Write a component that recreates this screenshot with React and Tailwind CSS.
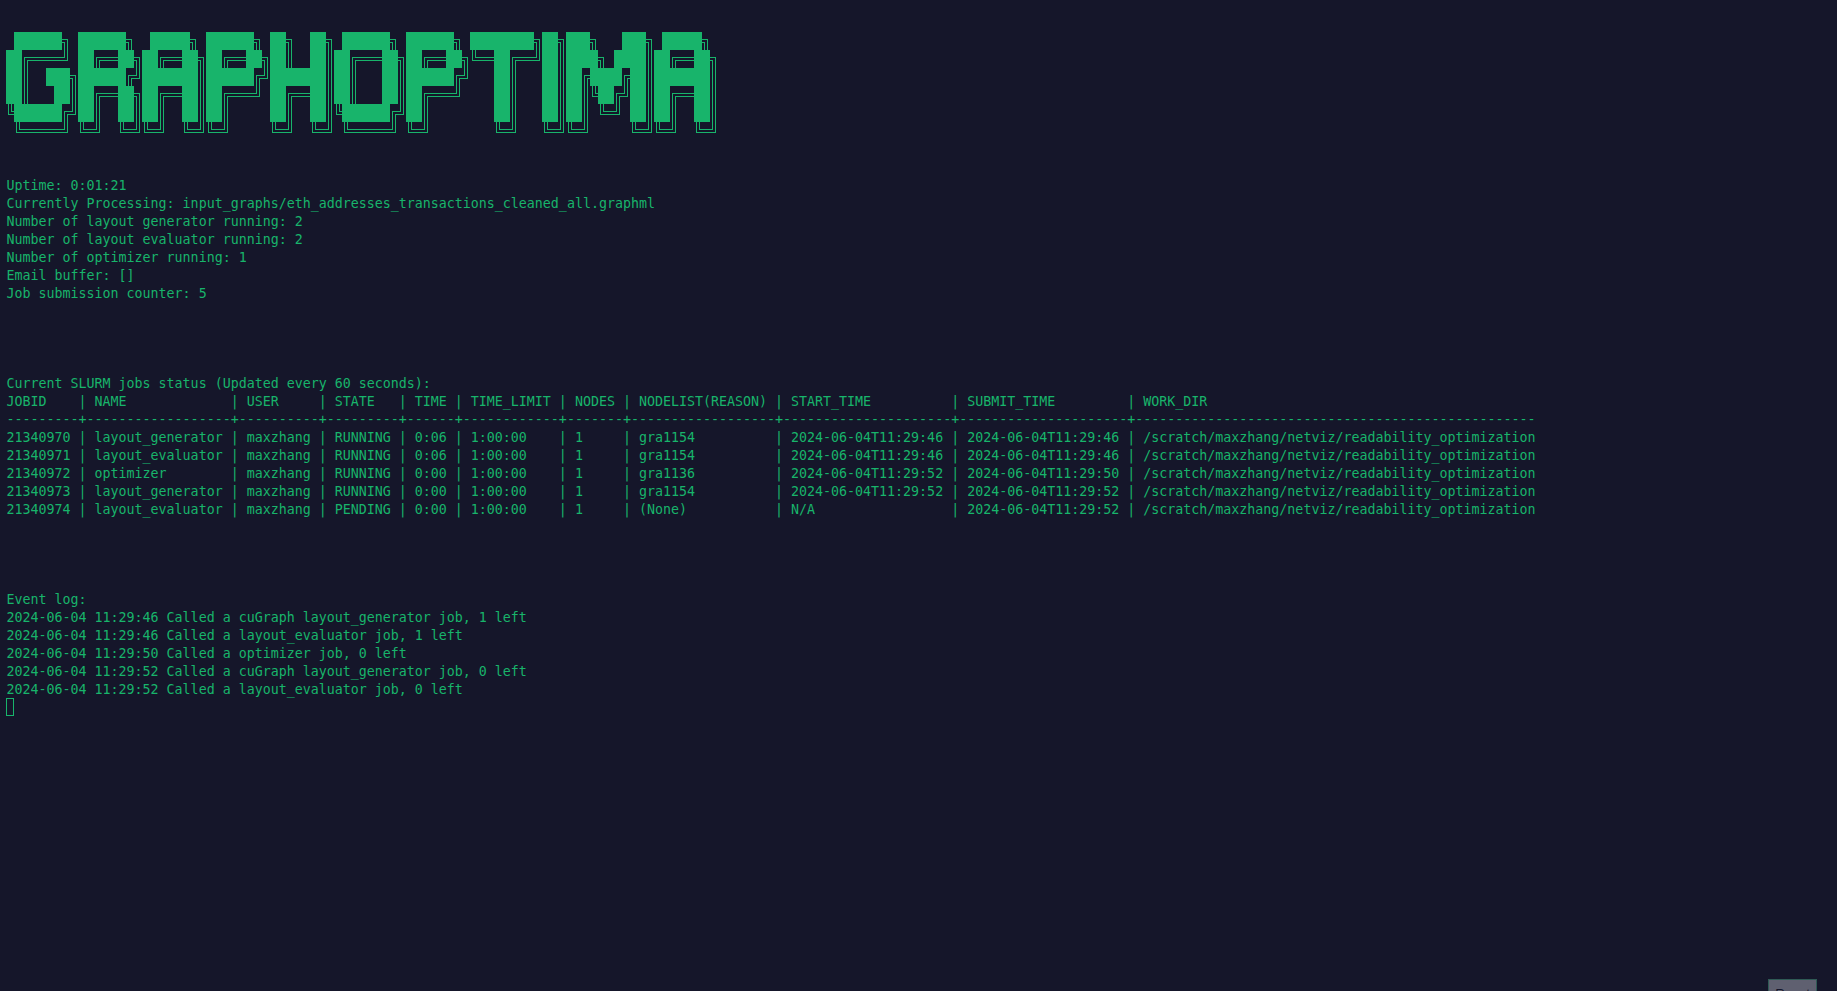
import React from 'react';

// ascii banner, same cells as the terminal (8 x 18)
const banner = [
  ' ██████╗ ██████╗  █████╗ ██████╗ ██╗  ██╗ ██████╗ ██████╗ ████████╗██╗███╗   ███╗ █████╗ ',
  '██╔════╝ ██╔══██╗██╔══██╗██╔══██╗██║  ██║██╔═══██╗██╔══██╗╚══██╔══╝██║████╗ ████║██╔══██╗',
  '██║  ███╗██████╔╝███████║██████╔╝███████║██║   ██║██████╔╝   ██║   ██║██╔████╔██║███████║',
  '██║   ██║██╔══██╗██╔══██║██╔═══╝ ██╔══██║██║   ██║██╔═══╝    ██║   ██║██║╚██╔╝██║██╔══██║',
  '╚██████╔╝██║  ██║██║  ██║██║     ██║  ██║╚██████╔╝██║        ██║   ██║██║ ╚═╝ ██║██║  ██║',
  ' ╚═════╝ ╚═╝  ╚═╝╚═╝  ╚═╝╚═╝     ╚═╝  ╚═╝ ╚═════╝ ╚═╝        ╚═╝   ╚═╝╚═╝     ╚═╝╚═╝  ╚═╝',
];

const CW = 8;
const CH = 18;

// double line glyphs, x1 x2 = inner/outer vertical, y1 y2 = horizontal lines
const X1 = 2.5, X2 = 5.5, Y1 = 7.5, Y2 = 10.5;
const glyphs = {
  '═': [`M0 ${Y1}H${CW}`, `M0 ${Y2}H${CW}`],
  '║': [`M${X1} 0V${CH}`, `M${X2} 0V${CH}`],
  '╗': [`M0 ${Y1}H${X2}V${CH}`, `M0 ${Y2}H${X1}V${CH}`],
  '╝': [`M0 ${Y2}H${X2}V0`, `M0 ${Y1}H${X1}V0`],
  '╔': [`M${CW} ${Y1}H${X1}V${CH}`, `M${CW} ${Y2}H${X2}V${CH}`],
  '╚': [`M${CW} ${Y2}H${X1}V0`, `M${CW} ${Y1}H${X2}V0`],
};

const Banner = () => (
  <svg width={CW * 90} height={CH * 6} className="block" role="img" aria-label="GRAPHOPTIMA" shapeRendering="crispEdges">
    {banner.map((line, r) =>
      [...line].map((c, i) => {
        if (c === ' ') return null;
        if (c === '█') {
          return <rect key={`${r}-${i}`} x={i * CW} y={r * CH} width={CW} height={CH} fill="#18b46b" />;
        }
        return (
          <g key={`${r}-${i}`} transform={`translate(${i * CW} ${r * CH})`} fill="none" stroke="#18b46b" strokeWidth="1">
            {glyphs[c].map((d) => <path key={d} d={d} />)}
          </g>
        );
      })
    )}
  </svg>
);

const status = [
  'Uptime: 0:01:21',
  'Currently Processing: input_graphs/eth_addresses_transactions_cleaned_all.graphml',
  'Number of layout generator running: 2',
  'Number of layout evaluator running: 2',
  'Number of optimizer running: 1',
  'Email buffer: []',
  'Job submission counter: 5',
];

const dir = '/scratch/maxzhang/netviz/readability_optimization';

const jobs = [
  'Current SLURM jobs status (Updated every 60 seconds):',
  'JOBID    | NAME             | USER     | STATE   | TIME | TIME_LIMIT | NODES | NODELIST(REASON) | START_TIME          | SUBMIT_TIME         | WORK_DIR',
  '---------+------------------+----------+---------+------+------------+-------+------------------+---------------------+---------------------+--------------------------------------------------',
  `21340970 | layout_generator | maxzhang | RUNNING | 0:06 | 1:00:00    | 1     | gra1154          | 2024-06-04T11:29:46 | 2024-06-04T11:29:46 | ${dir}`,
  `21340971 | layout_evaluator | maxzhang | RUNNING | 0:06 | 1:00:00    | 1     | gra1154          | 2024-06-04T11:29:46 | 2024-06-04T11:29:46 | ${dir}`,
  `21340972 | optimizer        | maxzhang | RUNNING | 0:00 | 1:00:00    | 1     | gra1136          | 2024-06-04T11:29:52 | 2024-06-04T11:29:50 | ${dir}`,
  `21340973 | layout_generator | maxzhang | RUNNING | 0:00 | 1:00:00    | 1     | gra1154          | 2024-06-04T11:29:52 | 2024-06-04T11:29:52 | ${dir}`,
  `21340974 | layout_evaluator | maxzhang | PENDING | 0:00 | 1:00:00    | 1     | (None)           | N/A                 | 2024-06-04T11:29:52 | ${dir}`,
];

const events = [
  'Event log:',
  '2024-06-04 11:29:46 Called a cuGraph layout_generator job, 1 left',
  '2024-06-04 11:29:46 Called a layout_evaluator job, 1 left',
  '2024-06-04 11:29:50 Called a optimizer job, 0 left',
  '2024-06-04 11:29:52 Called a cuGraph layout_generator job, 0 left',
  '2024-06-04 11:29:52 Called a layout_evaluator job, 0 left',
];

const Lines = ({ items }) => items.map((t) => <div key={t} className="h-[18px] pl-[0.5px] pt-px">{t}</div>);

export default function App() {
  return (
    <div className="relative h-[991px] w-[1837px] overflow-hidden bg-[#15162a] text-[#18b46b] font-['DejaVu_Sans_Mono',monospace] text-[13.3px] leading-[18px] whitespace-pre">
      <div className="px-1.5 pt-8">
        <Banner />
        <div className="mt-[36px]"><Lines items={status} /></div>
        <div className="mt-[72px]"><Lines items={jobs} /></div>
        <div className="mt-[72px]"><Lines items={events} /></div>
        <div className="h-[18px] w-2 border border-[#18b46b]" />
      </div>
      <div className="absolute bottom-[-24px] right-[20px] h-[36px] w-[49px] border border-[#2f5a55] bg-[#5f6070] pt-[5px] text-center font-['Liberation_Sans',sans-serif] text-[#14162a]">Reset</div>
    </div>
  );
}
